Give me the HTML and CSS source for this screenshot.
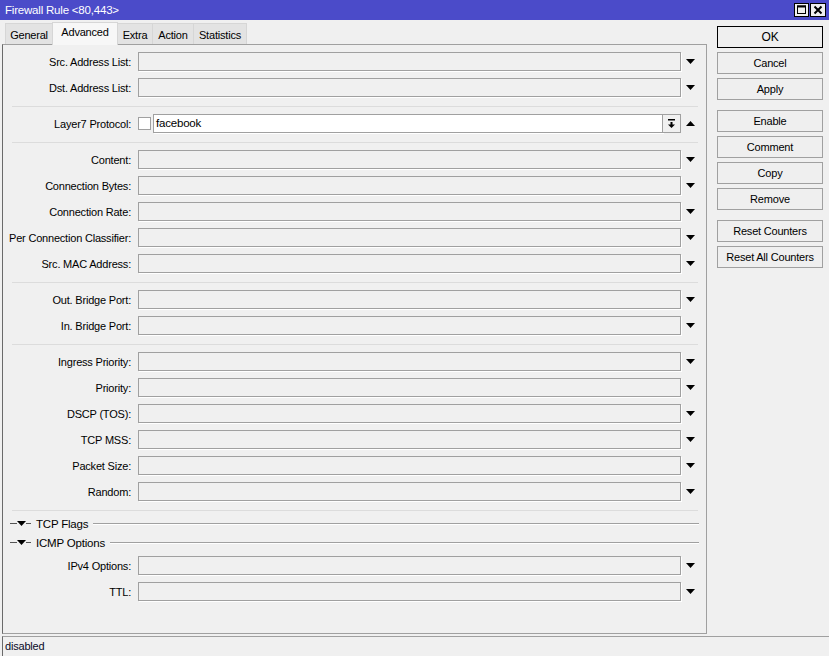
FILE: index.html
```html
<!DOCTYPE html>
<html>
<head>
<meta charset="utf-8">
<link rel="stylesheet" href="styles.css">
</head>
<body>
<div class="titlebar">
  <span class="title">Firewall Rule &lt;80,443&gt;</span>
  <div class="tbtns">
    <span class="tbtn"><svg width="15" height="14" viewBox="0 0 15 14"><rect x="0.5" y="0.5" width="14" height="13" fill="#f0f0f0" stroke="#000"/><rect x="3.5" y="3" width="8" height="7.5" fill="none" stroke="#000"/><rect x="3" y="2.5" width="9" height="2" fill="#000"/></svg></span>
    <span class="tbtn"><svg width="16" height="14" viewBox="0 0 16 14"><rect x="0.5" y="0.5" width="15" height="13" fill="#f0f0f0" stroke="#000"/><path d="M4.5 3.5L11.5 10.5M11.5 3.5L4.5 10.5" stroke="#000" stroke-width="2"/></svg></span>
  </div>
</div>
<div class="main">
  <div class="left">
    <div class="tabs">
      <div class="tab t1">General</div>
      <div class="tab t2 sel">Advanced</div>
      <div class="tab t3">Extra</div>
      <div class="tab t4">Action</div>
      <div class="tab t5">Statistics</div>
    </div>
    <div class="panel">
      <div class="row"><label>Src. Address List:</label><div class="field"></div><span class="dd"><i class="down"></i></span></div>
      <div class="row"><label>Dst. Address List:</label><div class="field"></div><span class="dd"><i class="down"></i></span></div>
      <div class="sep"></div>
      <div class="row"><label>Layer7 Protocol:</label>
        <div class="l7">
          <span class="chk"></span>
          <div class="field white">facebook</div>
          <span class="l7btn"><svg width="9" height="10" viewBox="0 0 9 10"><rect x="1" y="0" width="7" height="1.5" fill="#000"/><rect x="3.5" y="3" width="2" height="3" fill="#000"/><path d="M1 5.5H8L4.5 9Z" fill="#000"/></svg></span>
        </div>
        <span class="dd"><i class="up"></i></span></div>
      <div class="sep"></div>
      <div class="row"><label>Content:</label><div class="field"></div><span class="dd"><i class="down"></i></span></div>
      <div class="row"><label>Connection Bytes:</label><div class="field"></div><span class="dd"><i class="down"></i></span></div>
      <div class="row"><label>Connection Rate:</label><div class="field"></div><span class="dd"><i class="down"></i></span></div>
      <div class="row"><label>Per Connection Classifier:</label><div class="field"></div><span class="dd"><i class="down"></i></span></div>
      <div class="row"><label>Src. MAC Address:</label><div class="field"></div><span class="dd"><i class="down"></i></span></div>
      <div class="sep"></div>
      <div class="row"><label>Out. Bridge Port:</label><div class="field"></div><span class="dd"><i class="down"></i></span></div>
      <div class="row"><label>In. Bridge Port:</label><div class="field"></div><span class="dd"><i class="down"></i></span></div>
      <div class="sep"></div>
      <div class="row"><label>Ingress Priority:</label><div class="field"></div><span class="dd"><i class="down"></i></span></div>
      <div class="row"><label>Priority:</label><div class="field"></div><span class="dd"><i class="down"></i></span></div>
      <div class="row"><label>DSCP (TOS):</label><div class="field"></div><span class="dd"><i class="down"></i></span></div>
      <div class="row"><label>TCP MSS:</label><div class="field"></div><span class="dd"><i class="down"></i></span></div>
      <div class="row"><label>Packet Size:</label><div class="field"></div><span class="dd"><i class="down"></i></span></div>
      <div class="row"><label>Random:</label><div class="field"></div><span class="dd"><i class="down"></i></span></div>
      <div class="sep last"></div>
      <div class="sections">
        <div class="sec"><span class="dash1"></span><i class="down"></i><span class="dash2"></span><span class="sectext">TCP Flags</span><span class="secline"></span></div>
        <div class="sec"><span class="dash1"></span><i class="down"></i><span class="dash2"></span><span class="sectext">ICMP Options</span><span class="secline"></span></div>
      </div>
      <div class="row"><label>IPv4 Options:</label><div class="field"></div><span class="dd"><i class="down"></i></span></div>
      <div class="row"><label>TTL:</label><div class="field"></div><span class="dd"><i class="down"></i></span></div>
    </div>
  </div>
  <div class="buttons">
    <div class="btn ok">OK</div>
    <div class="btn">Cancel</div>
    <div class="btn">Apply</div>
    <div class="btn gap">Enable</div>
    <div class="btn">Comment</div>
    <div class="btn">Copy</div>
    <div class="btn">Remove</div>
    <div class="btn gap">Reset Counters</div>
    <div class="btn">Reset All Counters</div>
  </div>
</div>
<div class="status">disabled</div>
</body>
</html>
```
FILE: styles.css
```css
* { box-sizing: border-box; }
body {
  margin: 0;
  width: 829px;
  height: 656px;
  overflow: hidden;
  background: #f0f0f0;
  font-family: "Liberation Sans", Arial, sans-serif;
  font-size: 11px;
  letter-spacing: -0.2px;
  color: #000;
}
.titlebar {
  height: 20px;
  background: #4b4bc9;
  color: #fff;
  display: flex;
  align-items: center;
  padding-left: 5px;
  font-size: 11.5px;
}
.title { line-height: 20px; }
.tbtns { margin-left: auto; margin-right: 3px; display: flex; gap: 1px; }
.tbtn { display: block; height: 14px; }
.tbtn svg { display: block; }

.main { display: flex; height: 614px; padding-left: 2px; }
.left { width: 705px; display: flex; flex-direction: column; }
.tabs {
  height: 24px;
  display: flex;
  align-items: flex-end;
  padding-left: 3px;
  position: relative;
  z-index: 1;
}
.tab {
  height: 21px;
  border: 1px solid #d6d6d6;
  border-bottom: none;
  background: #e3e3e3;
  display: flex;
  align-items: center;
  justify-content: center;
  margin-right: -1px;
  padding-top: 1px;
}
.tab.sel {
  height: 23px;
  margin-bottom: -1px;
  background: #f7f7f7;
  padding-top: 0;
  padding-bottom: 4px;
}
.t1 { width: 48px; }
.t2 { width: 66px; }
.t3 { width: 36px; }
.t4 { width: 42px; }
.t5 { width: 54px; }

.panel {
  height: 590px;
  border: 1px solid #a0a0a0;
  border-left-color: #6a6a6a;
  padding-top: 7px;
  display: flex;
  flex-direction: column;
}
.row {
  display: flex;
  align-items: center;
  height: 19px;
  margin-bottom: 7px;
  flex-shrink: 0;
}
.row label {
  width: 128px;
  text-align: right;
  margin-right: 7px;
  white-space: nowrap;
}
.field {
  width: 543px;
  height: 19px;
  border: 1px solid #a0a0a0;
  background: #f0f0f0;
  box-shadow: 1px 1px 0 #fff;
  padding-left: 2px;
  line-height: 17px;
}
.dd {
  width: 18px;
  height: 19px;
  display: flex;
  align-items: center;
  justify-content: center;
  padding-left: 1px;
}
i.down, i.up {
  display: block;
  width: 9px;
  height: 5px;
  background: #000;
}
i.down { clip-path: polygon(0 0, 100% 0, 50% 100%); }
i.up { clip-path: polygon(50% 0, 100% 100%, 0 100%); }

.l7 { width: 543px; height: 19px; display: flex; align-items: center; }
.chk {
  width: 13px;
  height: 13px;
  border: 1px solid #a0a0a0;
  background: #fff;
  margin-right: 2px;
}
.field.white {
  flex: 1;
  width: auto;
  background: #fff;
  font-size: 11.5px;
  padding-left: 2px;
}
.l7btn {
  width: 18px;
  height: 19px;
  border: 1px solid #a0a0a0;
  border-left: none;
  background: #f0f0f0;
  display: flex;
  align-items: center;
  justify-content: center;
}
.l7btn svg { display: block; }

.sep {
  height: 1px;
  flex-shrink: 0;
  background: #dcdcdc;
  margin: 2px 8px 7px 9px;
}
.sep.last { margin-bottom: 3px; }
.sections { margin-bottom: 4px; flex-shrink: 0; }
.sec {
  display: flex;
  align-items: center;
  height: 19px;
}
.dash1 { width: 7px; height: 1px; background: #555; margin-left: 7px; }
.dash2 { width: 5px; height: 1px; background: #555; }
.sectext { margin-left: 5px; font-size: 11.5px; }
.secline {
  flex: 1;
  height: 2px;
  border-top: 1px solid #a0a0a0;
  border-bottom: 1px solid #fff;
  margin-left: 5px;
  margin-right: 7px;
}

.buttons {
  width: 106px;
  margin-left: 10px;
  padding-top: 6px;
  display: flex;
  flex-direction: column;
}
.btn {
  height: 22px;
  flex-shrink: 0;
  border: 1px solid #a0a0a0;
  background: #efefef;
  display: flex;
  align-items: center;
  justify-content: center;
  margin-bottom: 4px;
  white-space: nowrap;
}
.btn.ok { border-color: #000; font-size: 12px; }
.btn.gap { margin-top: 6px; }

.status {
  margin-top: 2px;
  margin-left: 2px;
  height: 20px;
  border-top: 1px solid #a0a0a0;
  border-left: 1px solid #6a6a6a;
  padding-left: 2px;
  line-height: 19px;
  color: #0a0a28;
}
```
